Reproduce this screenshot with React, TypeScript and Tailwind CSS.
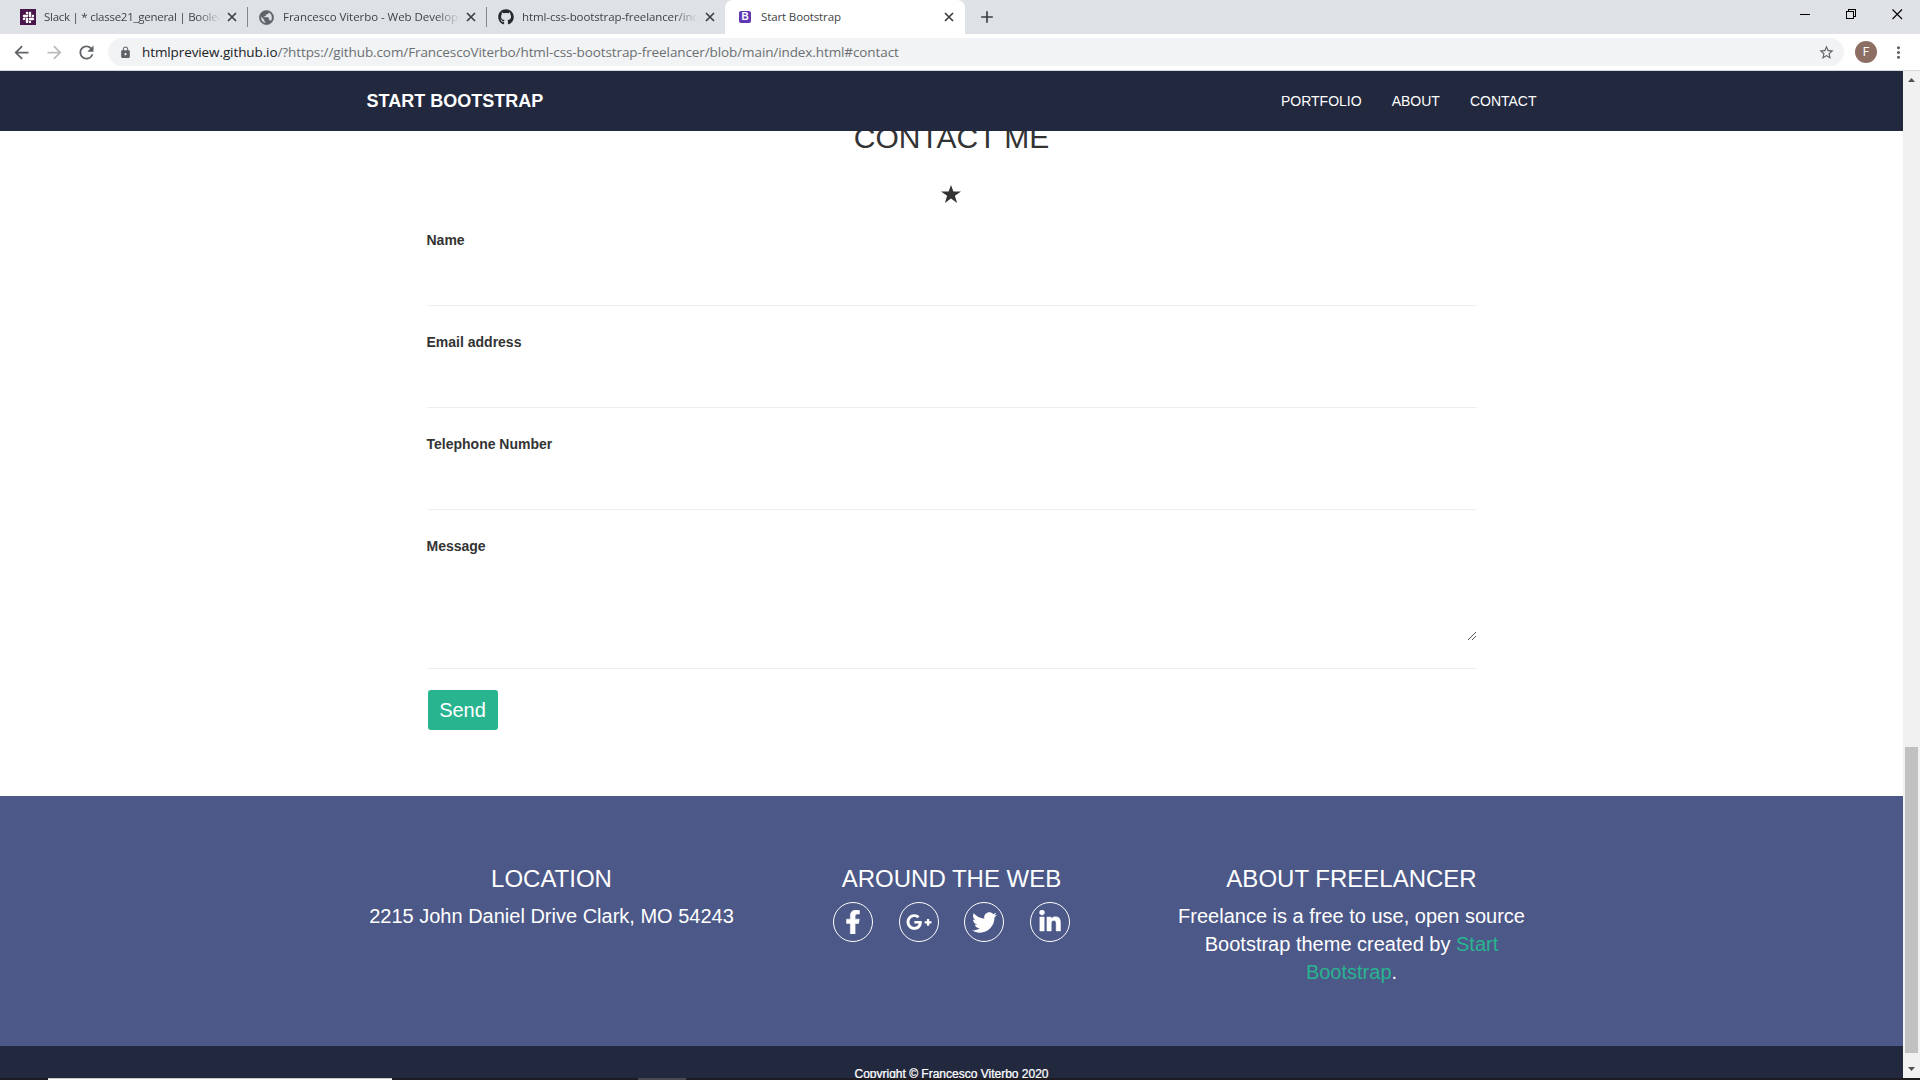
import React from "react";
import { FaFacebookF, FaGithub, FaGooglePlusG, FaLinkedinIn, FaSlack, FaTwitter } from "react-icons/fa";
import { MdAdd, MdArrowBack, MdArrowForward, MdLock, MdMoreVert, MdRefresh, MdStarBorder } from "react-icons/md";

function TabText({ children, className }: { children: string; className: string }) {
  return (
    <span
      className={`${className} shrink-0 overflow-hidden whitespace-nowrap font-['Open_Sans',sans-serif] text-[11.5px] leading-4 text-[#3f4347]`}
    >
      {children}
    </span>
  );
}

function CloseIcon({ className = "" }: { className?: string }) {
  return (
    <svg width="14" height="14" viewBox="0 0 14 14" className={`shrink-0 ${className}`} stroke="#3c4043" strokeWidth="1.7">
      <path d="M3 3l8 8M11 3l-8 8" />
    </svg>
  );
}

function GlobeIcon() {
  return (
    <svg width="17" height="17" viewBox="0 0 24 24" className="shrink-0" fill="#5f6368" stroke="#5f6368" strokeWidth="0.8">
      <path d="M12 2C6.48 2 2 6.48 2 12s4.48 10 10 10 10-4.48 10-10S17.52 2 12 2zm-1 17.93c-3.95-.49-7-3.85-7-7.93 0-.62.08-1.21.21-1.79L9 15v1c0 1.1.9 2 2 2v1.93zm6.9-2.54c-.26-.81-1-1.39-1.9-1.39h-1v-3c0-.55-.45-1-1-1H8v-2h2c.55 0 1-.45 1-1V7h2c1.1 0 2-.9 2-2v-.41c2.93 1.19 5 4.06 5 7.41 0 2.08-.8 3.97-2.1 5.39z" />
    </svg>
  );
}

const fade = "[mask-image:linear-gradient(to_right,black_calc(100%-24px),transparent)]";

function TabStrip() {
  return (
    <div className="flex h-[34px] shrink-0 items-center bg-[#dee1e6]">
      <div className="flex h-full w-[247px] shrink-0 items-center pl-5">
        <span className="flex size-4 items-center justify-center bg-[#4a154b] text-white">
          <FaSlack size={13} />
        </span>
        <TabText className={`ml-2 w-[177px] tracking-[-0.26px] ${fade}`}>Slack | * classe21_general | Boolean</TabText>
        <CloseIcon className="ml-1" />
      </div>
      <div className="h-5 w-px shrink-0 bg-[#83868b]" />
      <div className="flex h-full w-[238px] shrink-0 items-center pl-[10px]">
        <GlobeIcon />
        <TabText className={`ml-2 w-[177px] tracking-[-0.05px] ${fade}`}>Francesco Viterbo - Web Developer</TabText>
        <CloseIcon className="ml-1" />
      </div>
      <div className="h-5 w-px shrink-0 bg-[#83868b]" />
      <div className="flex h-full w-[238px] shrink-0 items-center pl-[11px]">
        <FaGithub size={16} className="text-[#24292e]" />
        <TabText className={`ml-2 w-[176px] tracking-[-0.1px] ${fade}`}>html-css-bootstrap-freelancer/index</TabText>
        <CloseIcon className="ml-[5px]" />
      </div>
      <div className="flex h-full w-[240px] shrink-0 items-center rounded-t-lg bg-white pl-[14px]">
        <span className="flex size-3 items-center justify-center rounded-[2px] bg-[#6137b5] font-['Liberation_Sans',sans-serif] text-[10px] font-bold leading-none text-white">
          B
        </span>
        <TabText className="ml-[10px] w-[181px] tracking-[-0.12px]">Start Bootstrap</TabText>
        <CloseIcon />
      </div>
      <MdAdd size={20} className="ml-3 text-[#3c4043]" />
      <div className="ml-auto flex h-full items-start pr-[17px] pt-[9px]">
        <svg width="11" height="11" viewBox="0 0 11 11" className="mr-[35px]" shapeRendering="crispEdges">
          <path d="M0 5.5h10" stroke="black" />
        </svg>
        <svg width="11" height="11" viewBox="0 0 11 11" className="mr-[35px]" fill="none" stroke="black" shapeRendering="crispEdges">
          <path d="M.5 2.5h7v7h-7zM2.5 2.5v-2h7v7h-2" />
        </svg>
        <svg width="11" height="11" viewBox="0 0 11 11" stroke="black" strokeWidth="1.1">
          <path d="M.5.5l9.5 9.5M10 .5L.5 10" />
        </svg>
      </div>
    </div>
  );
}

function Toolbar() {
  return (
    <div className="flex h-[37px] shrink-0 items-center border-b border-[#d5d8dc] bg-white">
      <MdArrowBack size={21} className="ml-[11px] text-[#5f6368]" />
      <MdArrowForward size={21} className="ml-3 text-[#babcbe]" />
      <MdRefresh size={21} className="ml-[11px] text-[#5f6368]" />
      <div className="ml-[11px] flex h-7 w-[1736px] shrink-0 items-center rounded-full bg-[#f1f3f4] pl-[11px] pr-[9px]">
        <MdLock size={13} className="text-[#5f6368]" />
        <span className="ml-[10px] whitespace-nowrap pb-px font-['Open_Sans',sans-serif] text-[13.5px] leading-5 tracking-[-0.1px] text-[#6b6f73]">
          <span className="text-[#202124]">htmlpreview.github.io</span>
          /?https://github.com/FrancescoViterbo/html-css-bootstrap-freelancer/blob/main/index.html#contact
        </span>
        <MdStarBorder size={17} className="ml-auto text-[#5f6368]" />
      </div>
      <span className="ml-[11px] flex size-[22px] items-center justify-center rounded-full bg-[#8d6e63] font-[Roboto,sans-serif] text-[12px] text-white">
        F
      </span>
      <MdMoreVert size={19} className="ml-[12px] text-[#5f6368]" />
    </div>
  );
}

function NavBar() {
  return (
    <nav className="flex h-[60px] shrink-0 items-center justify-between bg-[#22283d] pl-[366.5px] pr-[366.5px] text-white">
      <span className="text-[18px] font-bold leading-5">START BOOTSTRAP</span>
      <div className="flex gap-[30px] text-[14px] leading-5">
        <span>PORTFOLIO</span>
        <span>ABOUT</span>
        <span>CONTACT</span>
      </div>
    </nav>
  );
}

function Field({ label }: { label: string }) {
  return (
    <div className="h-[102px] border-b border-[#eeeeee] pt-[26px]">
      <label className="block text-[14px] font-bold leading-5">{label}</label>
    </div>
  );
}

function ContactForm() {
  return (
    <section className="flex h-[665px] shrink-0 flex-col bg-white text-[#333333]">
      <div className="flex h-[73px] flex-col items-center overflow-hidden">
        <h2 className="-mt-[10px] text-[30px] leading-[33px]">CONTACT ME</h2>
        <svg width="20" height="18" viewBox="0 0 20 18" className="mr-px mt-[31px] shrink-0" fill="#333333">
          <path d="M10 0l2.4 6.6H20l-6.1 4.2L16.1 18 10 13.6 3.9 18l2.2-7.2L0 6.6h7.6z" />
        </svg>
      </div>
      <div className="mx-auto w-[1050px]">
        <Field label="Name" />
        <Field label="Email address" />
        <Field label="Telephone Number" />
        <div className="relative h-[159px] border-b border-[#eeeeee] pt-[26px]">
          <label className="block text-[14px] font-bold leading-5">Message</label>
          <svg width="8" height="8" viewBox="0 0 8 8" className="absolute right-px bottom-[28px]" stroke="#555555">
            <path d="M0 8L8 0M4 8l4-4" />
          </svg>
        </div>
        <button className="ml-px mt-[21px] flex h-10 w-[70px] items-center justify-center rounded-[3px] bg-[#28b48f] text-[20px] leading-7 text-white">
          Send
        </button>
      </div>
    </section>
  );
}

function Social({ children }: { children: React.ReactNode }) {
  return <span className="flex size-10 items-center justify-center rounded-full border border-white">{children}</span>;
}

function Footer() {
  return (
    <footer className="flex h-[250px] shrink-0 justify-center bg-[#4c5888] pt-[69px] text-center text-white">
      <div className="w-[400px]">
        <h3 className="text-[24px] leading-[27px]">LOCATION</h3>
        <p className="mt-[10px] text-[20px] leading-7">2215 John Daniel Drive Clark, MO 54243</p>
      </div>
      <div className="w-[400px]">
        <h3 className="text-[24px] leading-[27px]">AROUND THE WEB</h3>
        <div className="mt-[10px] flex justify-center gap-[25.67px]">
          <Social><FaFacebookF size={24} stroke="white" strokeWidth={12} /></Social>
          <Social><FaGooglePlusG size={26} /></Social>
          <Social><FaTwitter size={25} /></Social>
          <Social><FaLinkedinIn size={24} stroke="white" strokeWidth={10} /></Social>
        </div>
      </div>
      <div className="w-[400px] px-[15px]">
        <h3 className="text-[24px] leading-[27px]">ABOUT FREELANCER</h3>
        <p className="mt-[10px] text-[20px] leading-7">
          Freelance is a free to use, open source
          <br />
          Bootstrap theme created by <span className="text-[#28b48f]">Start</span>
          <br />
          <span className="text-[#28b48f]">Bootstrap</span>.
        </p>
      </div>
    </footer>
  );
}

function ScrollBar() {
  return (
    <div className="flex w-[17px] shrink-0 flex-col items-center bg-[#f1f1f1]">
      <svg width="7" height="4" viewBox="0 0 7 4" className="mt-[7px] shrink-0" fill="#505050">
        <path d="M0 4L3.5 0 7 4z" />
      </svg>
      <div className="mt-[665px] h-[306px] w-[13px] bg-[#c1c1c1]" />
      <svg width="7" height="4" viewBox="0 0 7 4" className="mt-[14px] shrink-0" fill="#505050">
        <path d="M0 0h7L3.5 4z" />
      </svg>
    </div>
  );
}

export default function App() {
  return (
    <div className="flex h-[1080px] w-[1920px] flex-col overflow-hidden bg-white font-['Liberation_Sans',Arial,sans-serif]">
      <TabStrip />
      <Toolbar />
      <div className="flex h-[1007px] shrink-0 overflow-hidden">
        <main className="flex flex-1 flex-col overflow-hidden">
          <NavBar />
          <ContactForm />
          <Footer />
          <div className="h-8 shrink-0 overflow-hidden bg-[#22283d] pt-5 text-center text-[12px] leading-[17px] text-white [-webkit-text-stroke:0.25px_white]">
            Copyright © Francesco Viterbo 2020
          </div>
        </main>
        <ScrollBar />
      </div>
      <div className="flex h-[2px] shrink-0 bg-[#1d1b20]">
        <div className="ml-12 h-full w-[344px] border-t border-[#c8c8c8] bg-white" />
        <div className="ml-[246px] h-full w-12 bg-[#4a494d]" />
      </div>
    </div>
  );
}
